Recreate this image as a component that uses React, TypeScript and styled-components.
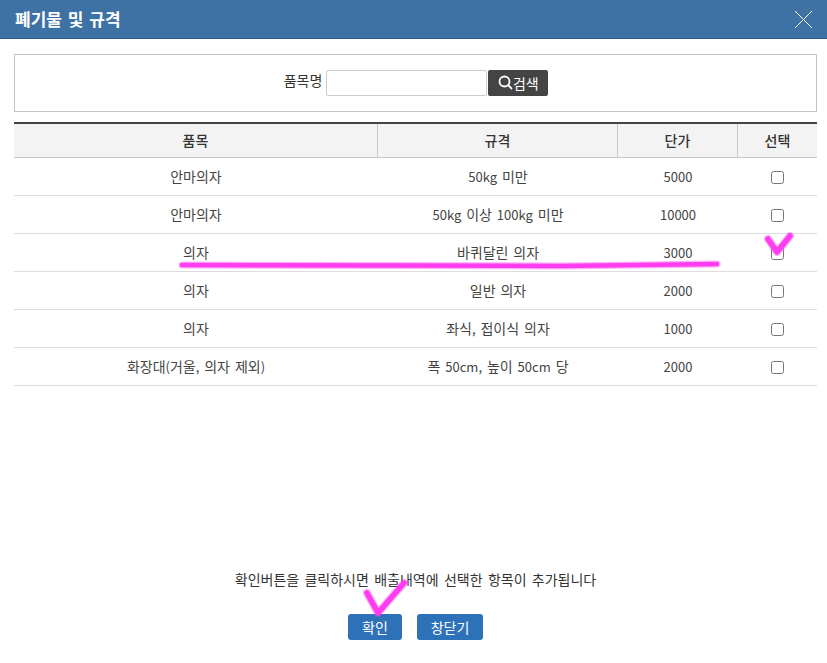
import React from "react";
import styled, { createGlobalStyle } from "styled-components";

const Global = createGlobalStyle`
  html, body { margin: 0; padding: 0; background: #fff; }
  body { font-family: "Noto Sans CJK KR", "Noto Sans", sans-serif; font-size: 13px; color: #333; word-spacing: 2px; }
  * { box-sizing: border-box; }
`;

const Page = styled.div`
  position: relative;
  width: 827px;
  height: 663px;
  overflow: hidden;
  display: flex;
  flex-direction: column;
`;

const Header = styled.header`
  height: 39px;
  background: #3f72a4;
  border-bottom: 1px solid #2f5a86;
  display: flex;
  align-items: center;
  justify-content: space-between;
  padding: 0 14px 0 15px;
`;

const Title = styled.h1`
  margin: 0;
  font-size: 17px;
  font-weight: 700;
  color: #fff;
  line-height: 36px;
  word-spacing: 2px;
`;

const CloseIcon = styled.svg`
  width: 19px;
  height: 19px;
  display: block;
`;

const Body = styled.main`
  flex: 1;
  padding: 15px 10px 0 14px;
  display: flex;
  flex-direction: column;
`;

const SearchBox = styled.form`
  height: 58px;
  border: 1px solid #c4c4c4;
  display: flex;
  align-items: center;
  justify-content: center;
  gap: 4px;
  margin: 0 0 10px;
  padding: 0 0 1px 1px;
`;

const SearchLabel = styled.label`
  line-height: 20px;
  color: #333;
  position: relative;
  top: -2px;
`;

const SearchInput = styled.input`
  width: 161px;
  height: 26px;
  border: 1px solid #ccc;
  border-radius: 2px;
  background: #fff;
  padding: 0 4px;
  outline: none;
`;

const SearchButton = styled.button`
  width: 60px;
  height: 26px;
  margin-left: -3px;
  border: 0;
  border-radius: 2px;
  background: #444;
  color: #fff;
  font: inherit;
  display: flex;
  align-items: center;
  justify-content: center;
  padding: 0;
`;

const SearchIcon = styled.svg`
  width: 15px;
  height: 15px;
  display: block;
`;

const Table = styled.table`
  width: 803px;
  border-collapse: separate;
  border-spacing: 0;
  table-layout: fixed;
  border-top: 2px solid #444;
`;

const Th = styled.th`
  height: 34px;
  padding: 0;
  background: #f3f3f3;
  border-bottom: 1px solid #c8c8c8;
  border-right: 1px solid #c8c8c8;
  font-weight: 500;
  color: #333;
  text-align: center;
  line-height: 18px;
  &:last-child { border-right: 0; }
`;

const Td = styled.td`
  height: 38px;
  padding: 0;
  border-bottom: 1px solid #ddd;
  color: #444;
  text-align: center;
  vertical-align: middle;
  line-height: 18px;
`;

const Check = styled.input`
  appearance: none;
  display: block;
  width: 13px;
  height: 13px;
  margin: 1px auto 0;
  border: 1px solid #767676;
  border-radius: 2.5px;
  background: #fff;
`;

const Notice = styled.p`
  margin: 0;
  position: absolute;
  left: 4px;
  right: 0;
  top: 569px;
  text-align: center;
  line-height: 20px;
  color: #333;
  word-spacing: 2.4px;
`;

const Actions = styled.div`
  position: absolute;
  left: 348px;
  top: 614px;
  display: flex;
  gap: 15px;
`;

const ActionButton = styled.button<{ $w: number }>`
  width: ${(p) => p.$w}px;
  height: 26px;
  border: 0;
  border-radius: 3px;
  background: #2d72b8;
  color: #fff;
  font: inherit;
  padding: 0;
`;

const Hangul = styled.span`
  font-size: 1.077em;
  font-weight: inherit;
`;

const Marks = styled.svg`
  position: absolute;
  left: 0;
  top: 0;
  pointer-events: none;
`;

const Soft = styled.g`
  stroke: #ff3cf0;
  opacity: 0.4;
`;

const Core = styled.g`
  stroke: #ff3cf0;
`;

const Ko = ({ children }: { children: string }) => (
  <>
    {children.split(/([\uAC00-\uD7A3]+)/).map((part, i) =>
      i % 2 ? <Hangul key={i}>{part}</Hangul> : part
    )}
  </>
);

const rows = [
  ["안마의자", "50kg 미만", "5000"],
  ["안마의자", "50kg 이상 100kg 미만", "10000"],
  ["의자", "바퀴달린 의자", "3000"],
  ["의자", "일반 의자", "2000"],
  ["의자", "좌식, 접이식 의자", "1000"],
  ["화장대(거울, 의자 제외)", "폭 50cm, 높이 50cm 당", "2000"],
];

const line = "M182 265 L400 265.5 L560 266 L717 264";
const tick = "M768 239 L777 252 L790 236";
const bottomTick = "M367 593 L378 613 L404 583";

export default function App() {
  return (
    <Page>
      <Global />
      <Header>
        <Title>폐기물 및 규격</Title>
        <CloseIcon viewBox="0 0 19 19" fill="none" stroke="#fff" strokeWidth="1">
          <path d="M1 1 L18 18 M18 1 L1 18" />
        </CloseIcon>
      </Header>
      <Body>
        <SearchBox onSubmit={(e) => e.preventDefault()}>
          <SearchLabel htmlFor="q"><Ko>품목명</Ko></SearchLabel>
          <SearchInput id="q" type="text" />
          <SearchButton type="button">
            <SearchIcon viewBox="0 0 15 15" fill="none" stroke="#fff" strokeWidth="1.8">
              <circle cx="6.5" cy="6.5" r="5" />
              <path d="M10.2 10.2 L14 14" />
            </SearchIcon>
            <Ko>검색</Ko>
          </SearchButton>
        </SearchBox>
        <Table>
          <colgroup>
            <col style={{ width: 364 }} />
            <col style={{ width: 240 }} />
            <col style={{ width: 120 }} />
            <col style={{ width: 79 }} />
          </colgroup>
          <thead>
            <tr>
              <Th><Ko>품목</Ko></Th>
              <Th><Ko>규격</Ko></Th>
              <Th><Ko>단가</Ko></Th>
              <Th><Ko>선택</Ko></Th>
            </tr>
          </thead>
          <tbody>
            {rows.map((r, i) => (
              <tr key={i}>
                <Td><Ko>{r[0]}</Ko></Td>
                <Td><Ko>{r[1]}</Ko></Td>
                <Td>{r[2]}</Td>
                <Td>
                  <Check type="checkbox" />
                </Td>
              </tr>
            ))}
          </tbody>
        </Table>
      </Body>
      <Notice><Ko>확인버튼을 클릭하시면 배출내역에 선택한 항목이 추가됩니다</Ko></Notice>
      <Actions>
        <ActionButton type="button" $w={54}><Ko>확인</Ko></ActionButton>
        <ActionButton type="button" $w={66}><Ko>창닫기</Ko></ActionButton>
      </Actions>
      <Marks width="827" height="663" viewBox="0 0 827 663" fill="none" strokeLinecap="round" strokeLinejoin="round">
        <Soft>
          <path d={line} strokeWidth="7" />
          <path d={tick} strokeWidth="8" />
          <path d={bottomTick} strokeWidth="8" />
        </Soft>
        <Core>
          <path d={line} strokeWidth="4.5" />
          <path d={tick} strokeWidth="5.5" />
          <path d={bottomTick} strokeWidth="5.5" />
        </Core>
      </Marks>
    </Page>
  );
}
